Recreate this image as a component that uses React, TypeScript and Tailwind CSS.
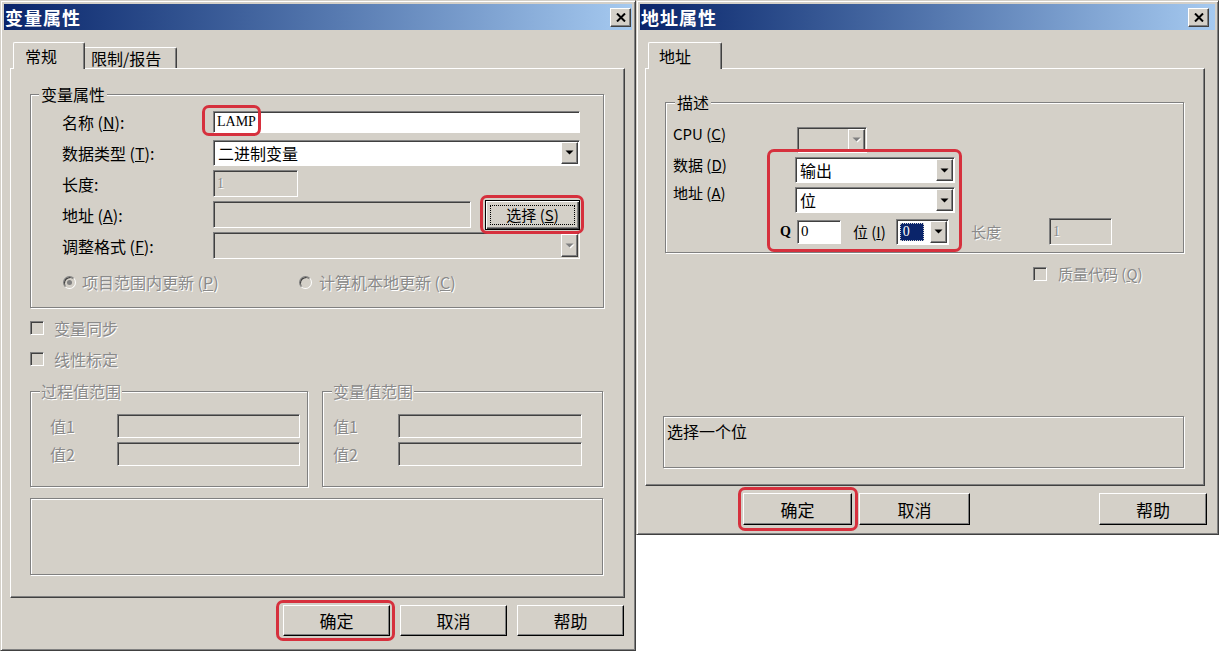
import React from "react";

const RAISED =
  "border border-t-white border-l-white border-r-[#404040] border-b-[#404040] shadow-[inset_-1px_-1px_0_#808080]";
const SUNKEN =
  "border border-t-[#808080] border-l-[#808080] border-r-white border-b-white shadow-[inset_1px_1px_0_#404040]";
const ETCHED =
  "border border-[#808080] shadow-[inset_1px_1px_0_#ffffff,1px_1px_0_#ffffff]";
const DIS = "text-[#8a8a8a] [text-shadow:1px_1px_0_#ffffff]";
const BTN =
  "border border-t-white border-l-white border-r-black border-b-black shadow-[inset_-1px_-1px_0_#808080] bg-[#d4d0c8] flex items-center justify-center text-[17px] leading-none";
const FRAME =
  "bg-[#d4d0c8] border border-t-[#d4d0c8] border-l-[#d4d0c8] border-r-[#404040] border-b-[#404040] shadow-[inset_1px_1px_0_#ffffff,inset_-1px_-1px_0_#808080] p-[3px] flex flex-col";

function Red({ className }: { className: string }) {
  return (
    <div
      className={
        "pointer-events-none absolute rounded-[7px] border-[3px] border-[#d6303d] " +
        className
      }
    />
  );
}

function Arrow({ disabled }: { disabled?: boolean }) {
  return disabled ? (
    <svg width="10" height="6" viewBox="0 0 10 6">
      <path d="M1.5 1.5h8L5.5 5.5z" fill="#ffffff" />
      <path d="M0.5 0.5h8L4.5 4.5z" fill="#808080" />
    </svg>
  ) : (
    <svg width="9" height="5" viewBox="0 0 9 5">
      <path d="M0.5 0.5h8L4.5 4.5z" fill="#000000" />
    </svg>
  );
}

function Combo({
  className,
  disabled,
  children,
}: {
  className: string;
  disabled?: boolean;
  children?: React.ReactNode;
}) {
  return (
    <div
      className={
        SUNKEN +
        " flex items-stretch p-[1px] " +
        (disabled ? "bg-[#d4d0c8] " : "bg-white ") +
        className
      }
    >
      <div className="flex-1 flex items-center pl-[3px] overflow-hidden text-[16px] leading-none">
        {children}
      </div>
      <div
        className={
          RAISED + " bg-[#d4d0c8] w-[17px] shrink-0 flex items-center justify-center"
        }
      >
        <Arrow disabled={disabled} />
      </div>
    </div>
  );
}

function CloseBtn() {
  return (
    <div
      className={
        RAISED + " bg-[#d4d0c8] w-[21px] h-[19px] flex items-center justify-center"
      }
    >
      <svg width="10" height="9" viewBox="0 0 10 9">
        <path d="M1 0.5 L9 8.5 M9 0.5 L1 8.5" stroke="#000" strokeWidth="2" />
      </svg>
    </div>
  );
}

function Radio({ checked }: { checked?: boolean }) {
  return (
    <span className="w-[13px] h-[13px] rounded-full border border-t-[#808080] border-l-[#808080] border-r-white border-b-white bg-[#d4d0c8] shadow-[inset_1px_1px_0_#404040] flex items-center justify-center shrink-0">
      {checked && <span className="w-[5px] h-[5px] rounded-full bg-[#808080]" />}
    </span>
  );
}

function Check() {
  return <span className={SUNKEN + " w-[14px] h-[14px] bg-[#d4d0c8] shrink-0"} />;
}

function TitleBar({ title, pr }: { title: string; pr: string }) {
  return (
    <div
      className={
        "h-[26px] shrink-0 flex items-center justify-between bg-linear-to-r from-[#0a246a] to-[#a6caf0] pl-[1px] " +
        pr
      }
    >
      <span className="text-white font-bold text-[18px] leading-none tracking-[1px]">
        {title}
      </span>
      <CloseBtn />
    </div>
  );
}

function LeftDialog() {
  return (
    <div className={FRAME + " w-[636px] h-[651px] shrink-0"}>
      <TitleBar title="变量属性" pr="pr-[1px]" />
      {/* tabs */}
      <div className="mt-[12px] ml-[9px] h-[26px] flex items-end">
        <div className="relative z-10 -mb-px h-[27px] w-[72px] bg-[#d4d0c8] border-t border-l border-r border-t-white border-l-white border-r-[#404040] shadow-[inset_-1px_0_0_#808080] rounded-t-[2px] pl-[11px] pt-[4px] text-[16px] leading-[18px]">
          常规
        </div>
        <div className="h-[21px] w-[92px] border-t border-r border-t-white border-r-[#404040] shadow-[inset_-1px_0_0_#808080] rounded-tr-[2px] pl-[6px] pt-[1px] text-[16px] leading-[18px]">
          限制/报告
        </div>
      </div>
      {/* panel */}
      <div className={RAISED + " ml-[6px] w-[615px] h-[530px] pl-[19px] pr-[20px] pt-[15px] flex flex-col"}>
        <fieldset className={ETCHED}>
          <legend className="ml-[8px] px-[2px] bg-[#d4d0c8] text-[16px] leading-[20px]">
            变量属性
          </legend>
          <div className="pl-[31px] pr-[23px] pt-[2px] pb-[10px]">
            <div className="flex items-center h-[31px]">
              <span className="w-[151px] text-[16px] leading-[20px]">
                名称 (<u>N</u>):
              </span>
              <div className={SUNKEN + " relative flex-1 h-[22px] bg-white flex items-center pl-[3px]"}>
                <span className="font-['Liberation_Serif',serif] text-[14px] leading-none">LAMP</span>
                <Red className="-left-[12px] -top-[7px] w-[59px] h-[31px]" />
              </div>
            </div>
            <div className="flex items-center h-[31px]">
              <span className="w-[151px] text-[16px] leading-[20px]">
                数据类型 (<u>T</u>):
              </span>
              <Combo className="flex-1 h-[26px]">二进制变量</Combo>
            </div>
            <div className="flex items-center h-[31px]">
              <span className="w-[151px] text-[16px] leading-[20px]">长度:</span>
              <div className={SUNKEN + " w-[85px] h-[27px] bg-[#d4d0c8] flex items-center pl-[3px]"}>
                <span className={"font-['Liberation_Serif',serif] text-[14px] leading-none " + DIS}>1</span>
              </div>
            </div>
            <div className="flex items-center h-[31px]">
              <span className="w-[151px] text-[16px] leading-[20px]">
                地址 (<u>A</u>):
              </span>
              <div className={SUNKEN + " w-[258px] h-[27px] bg-[#d4d0c8]"} />
              <div className="relative ml-auto">
                <div className="w-[95px] h-[30px] border border-black bg-[#d4d0c8] shadow-[inset_1px_1px_0_#ffffff,inset_-1px_-1px_0_#404040,inset_-2px_-2px_0_#808080] p-[4px]">
                  <div className="w-full h-full border border-dotted border-black flex items-center justify-center text-[15px] leading-none">
                    选择 (<u>S</u>)
                  </div>
                </div>
                <Red className="-left-[5px] -right-[4px] -top-[5px] -bottom-[4px]" />
              </div>
            </div>
            <div className="flex items-center h-[31px]">
              <span className="w-[151px] text-[16px] leading-[20px]">
                调整格式 (<u>F</u>):
              </span>
              <Combo className="flex-1 h-[27px]" disabled />
            </div>
            <div className="mt-[6px] h-[30px] flex items-center text-[16px] leading-[20px]">
              <div className="w-[237px] flex items-center pl-[1px]">
                <Radio checked />
                <span className={"ml-[6px] " + DIS}>
                  项目范围内更新 (<u>P</u>)
                </span>
              </div>
              <Radio />
              <span className={"ml-[7px] " + DIS}>
                计算机本地更新 (<u>C</u>)
              </span>
            </div>
          </div>
        </fieldset>

        <div className="mt-[4px] h-[31px] flex items-center text-[16px] leading-[20px]">
          <Check />
          <span className={"ml-[10px] " + DIS}>变量同步</span>
        </div>
        <div className="h-[31px] flex items-center text-[16px] leading-[20px]">
          <Check />
          <span className={"ml-[10px] " + DIS}>线性标定</span>
        </div>

        <div className="mt-[7px] flex gap-[14px]">
          <fieldset className={ETCHED + " w-[278px]"}>
            <legend className={"ml-[9px] px-[1px] bg-[#d4d0c8] text-[16px] leading-[20px] " + DIS}>
              过程值范围
            </legend>
            <div className="pl-[19px] pr-[7px] pt-[13px] pb-[20px]">
              <div className="flex items-center h-[24px]">
                <span className={"w-[67px] text-[16px] leading-[20px] " + DIS}>值1</span>
                <div className={SUNKEN + " flex-1 h-[24px] bg-[#d4d0c8]"} />
              </div>
              <div className="mt-[4px] flex items-center h-[24px]">
                <span className={"w-[67px] text-[16px] leading-[20px] " + DIS}>值2</span>
                <div className={SUNKEN + " flex-1 h-[24px] bg-[#d4d0c8]"} />
              </div>
            </div>
          </fieldset>
          <fieldset className={ETCHED + " w-[281px]"}>
            <legend className={"ml-[9px] px-[1px] bg-[#d4d0c8] text-[16px] leading-[20px] " + DIS}>
              变量值范围
            </legend>
            <div className="pl-[10px] pr-[20px] pt-[13px] pb-[20px]">
              <div className="flex items-center h-[24px]">
                <span className={"w-[65px] text-[16px] leading-[20px] " + DIS}>值1</span>
                <div className={SUNKEN + " flex-1 h-[24px] bg-[#d4d0c8]"} />
              </div>
              <div className="mt-[4px] flex items-center h-[24px]">
                <span className={"w-[65px] text-[16px] leading-[20px] " + DIS}>值2</span>
                <div className={SUNKEN + " flex-1 h-[24px] bg-[#d4d0c8]"} />
              </div>
            </div>
          </fieldset>
        </div>

        <div className={ETCHED + " mt-[11px] w-[573px] h-[77px]"} />
      </div>

      {/* buttons */}
      <div className="mt-[7px] flex justify-end gap-[10px] pr-[8px]">
        <div className="relative">
          <div className={BTN + " w-[107px] h-[31px]"}>确定</div>
          <Red className="-left-[7px] -right-[5px] -top-[5px] -bottom-[5px]" />
        </div>
        <div className={BTN + " w-[107px] h-[31px]"}>取消</div>
        <div className={BTN + " w-[107px] h-[31px]"}>帮助</div>
      </div>
    </div>
  );
}

function RightDialog() {
  return (
    <div className={FRAME + " w-[583px] h-[535px] shrink-0"}>
      <TitleBar title="地址属性" pr="pr-[6px]" />
      <div className="mt-[12px] ml-[8px] h-[26px] flex items-end">
        <div className="relative z-10 -mb-px h-[27px] w-[74px] bg-[#d4d0c8] border-t border-l border-r border-t-white border-l-white border-r-[#404040] shadow-[inset_-1px_0_0_#808080] rounded-t-[2px] pl-[10px] pt-[4px] text-[16px] leading-[18px]">
          地址
        </div>
      </div>
      <div className={RAISED + " ml-[5px] w-[560px] h-[418px] pl-[19px] pr-[20px] pt-[23px] flex flex-col"}>
        <fieldset className={ETCHED}>
          <legend className="ml-[9px] px-[2px] bg-[#d4d0c8] text-[16px] leading-[20px]">
            描述
          </legend>
          <div className="pl-[7px] pr-[7px] pt-[15px] pb-[7px] flex">
            <div className="w-[107px] shrink-0 flex flex-col text-[15px]">
              <span className="-mt-[3px] leading-[20px]">
                CPU (<u>C</u>)
              </span>
              <span className="mt-[11px] leading-[20px]">
                数据 (<u>D</u>)
              </span>
              <span className="mt-[8px] leading-[20px]">
                地址 (<u>A</u>)
              </span>
            </div>
            <div className="flex flex-col">
              <Combo className="ml-[17px] w-[70px] h-[26px]" disabled />
              <div className="mt-[4px] flex items-end">
                <div className="relative flex flex-col">
                  <Combo className="ml-[15px] w-[160px] h-[26px]">输出</Combo>
                  <Combo className="ml-[15px] mt-[4px] w-[160px] h-[26px]">位</Combo>
                  <div className="mt-[5px] h-[27px] flex items-center">
                    <span className="font-['Liberation_Serif',serif] text-[14px] font-bold leading-none">
                      Q
                    </span>
                    <div className={SUNKEN + " ml-[6px] w-[44px] h-[24px] bg-white flex items-center pl-[3px]"}>
                      <span className="font-['Liberation_Serif',serif] text-[15px] leading-none">0</span>
                    </div>
                    <span className="ml-[12px] text-[15px] leading-[20px]">
                      位 (<u>I</u>)
                    </span>
                    <Combo className="ml-[10px] w-[53px] h-[26px]">
                      <span className="ml-[-1px] h-[18px] w-[24px] bg-[#0a246a] border border-dotted border-[#d0d0d0] text-white font-['Liberation_Serif',serif] text-[14px] leading-[16px] pl-[2px]">
                        0
                      </span>
                    </Combo>
                  </div>
                  <Red className="-left-[13px] -right-[7px] -top-[8px] -bottom-[7px]" />
                </div>
                <div className="ml-[16px] h-[27px] flex items-center">
                  <span className={"text-[15px] leading-[20px] " + DIS}>长度</span>
                  <div className={SUNKEN + " ml-[48px] w-[63px] h-[27px] bg-[#d4d0c8] flex items-center pl-[3px]"}>
                    <span className={"font-['Liberation_Serif',serif] text-[14px] leading-none " + DIS}>1</span>
                  </div>
                </div>
              </div>
            </div>
          </div>
        </fieldset>
        <div className="mt-[13px] ml-[368px] h-[15px] flex items-center">
          <Check />
          <span className={"ml-[11px] text-[15px] leading-[20px] " + DIS}>
            质量代码 (<u>Q</u>)
          </span>
        </div>
        <div className={ETCHED + " mt-[135px] -ml-[2px] w-[521px] h-[52px] pl-[3px] pt-[4px] text-[16px] leading-[20px]"}>
          选择一个位
        </div>
      </div>
      <div className="mt-[7px] flex pr-[8px]">
        <div className="relative ml-[103px]">
          <div className={BTN + " w-[109px] h-[32px]"}>确定</div>
          <Red className="-left-[5px] -right-[6px] -top-[6px] -bottom-[6px]" />
        </div>
        <div className={BTN + " ml-[7px] w-[111px] h-[32px]"}>取消</div>
        <div className={BTN + " ml-auto w-[108px] h-[32px]"}>帮助</div>
      </div>
    </div>
  );
}

export default function App() {
  return (
    <div className="w-[1219px] h-[651px] flex bg-white overflow-hidden font-['Noto_Sans_CJK_SC','Noto_Sans',sans-serif] text-black">
      <LeftDialog />
      <div className="flex flex-col">
        <RightDialog />
      </div>
    </div>
  );
}
